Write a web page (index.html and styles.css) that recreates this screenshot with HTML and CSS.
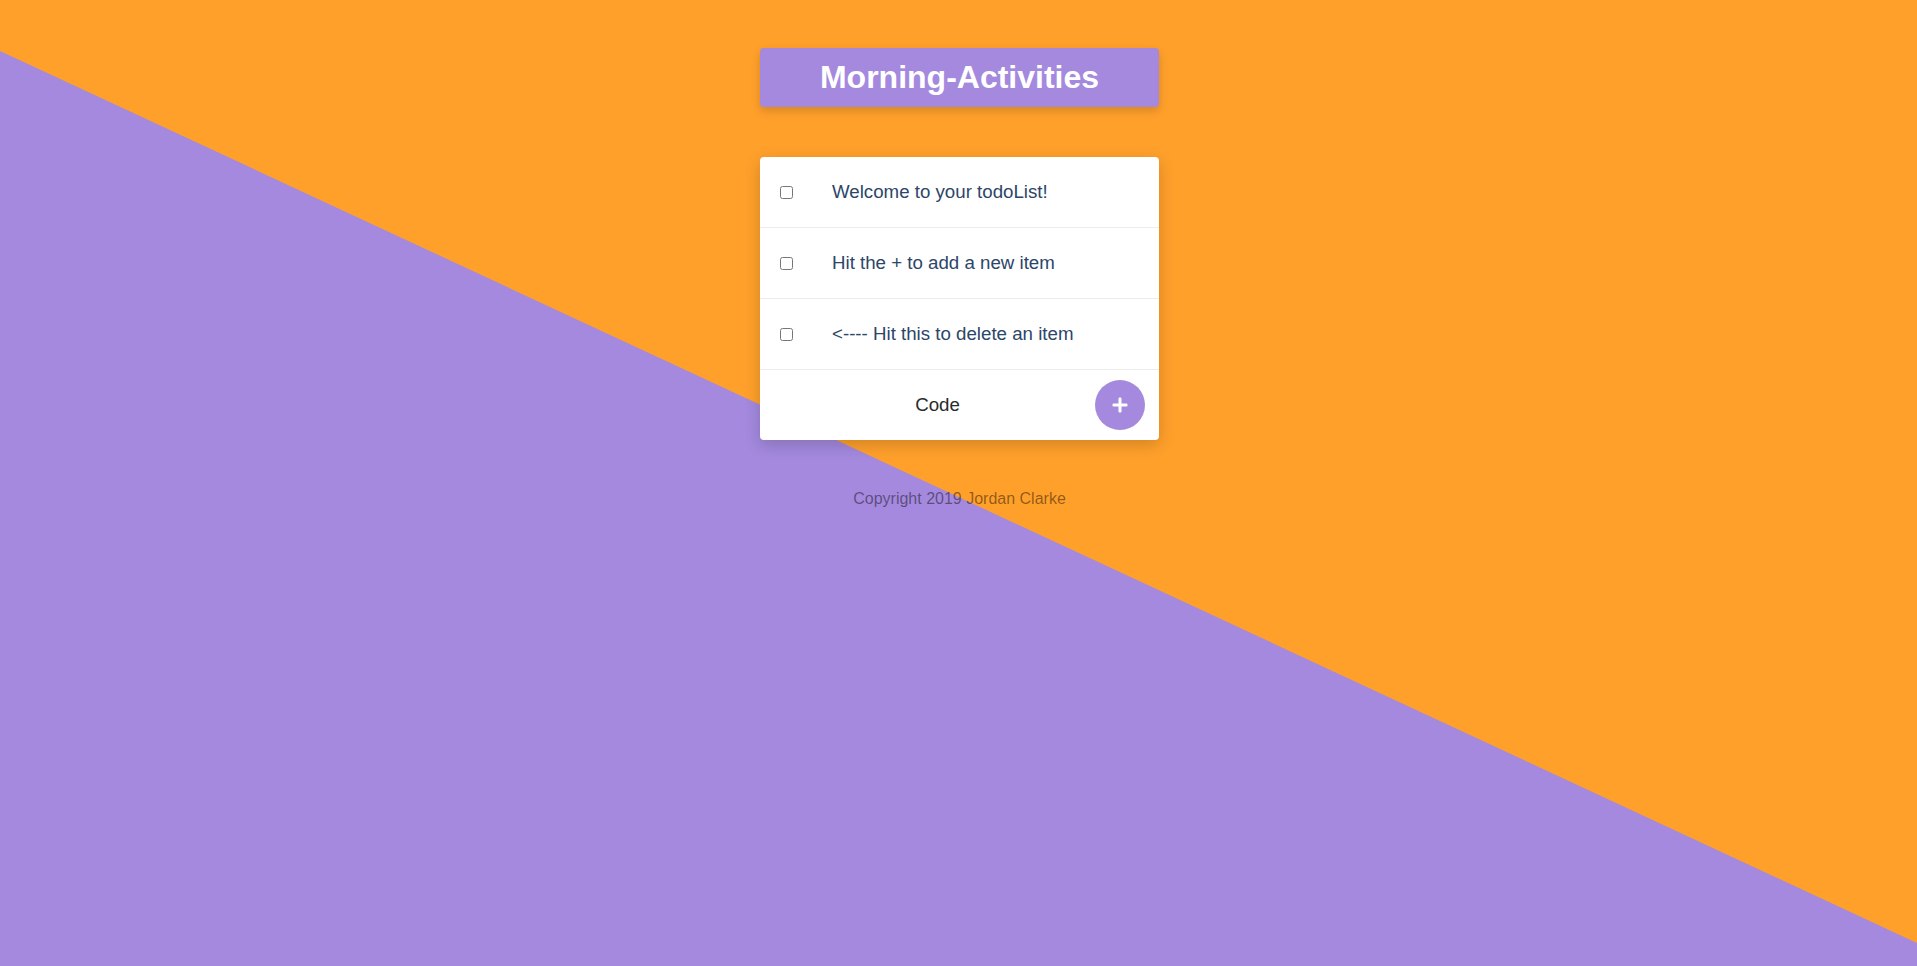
FILE: index.html
```html
<!DOCTYPE html>
<html lang="en">
<head>
<meta charset="utf-8">
<title>Morning-Activities</title>
<link rel="stylesheet" href="styles.css">
</head>
<body>
<div class="backdrop"></div>
<main class="page">
  <h1 class="title">Morning-Activities</h1>
  <section class="card">
    <div class="row">
      <input type="checkbox" class="check">
      <span class="item">Welcome to your todoList!</span>
    </div>
    <div class="row">
      <input type="checkbox" class="check">
      <span class="item">Hit the + to add a new item</span>
    </div>
    <div class="row">
      <input type="checkbox" class="check">
      <span class="item">&lt;---- Hit this to delete an item</span>
    </div>
    <div class="footer">
      <span class="code">Code</span>
      <button class="add" type="button" aria-label="Add item">
        <svg width="16" height="16" viewBox="0 0 16 16"><rect x="6.5" y="0.5" width="3" height="15" rx="1.2" fill="#fff"/><rect x="0.5" y="6.5" width="15" height="3" rx="1.2" fill="#fff"/></svg>
      </button>
    </div>
  </section>
  <p class="copyright">Copyright 2019 Jordan Clarke</p>
</main>
</body>
</html>
```

FILE: styles.css
```css
html, body {
  margin: 0;
  padding: 0;
  height: 100%;
}
body {
  background: #ffa02b;
  font-family: "Liberation Sans", Arial, sans-serif;
  position: relative;
  min-height: 966px;
  overflow: hidden;
}
.backdrop {
  position: absolute;
  inset: 0;
  background: #a489de;
  clip-path: polygon(0 51px, 100% 943px, 100% 100%, 0 100%);
  z-index: 0;
}
.page {
  position: relative;
  z-index: 1;
  display: flex;
  flex-direction: column;
  align-items: center;
  padding-top: 48px;
  padding-left: 2px;
}
.title {
  margin: 0;
  width: 399px;
  height: 59px;
  box-sizing: border-box;
  display: flex;
  align-items: center;
  justify-content: center;
  background: #a489de;
  color: #fff;
  font-size: 32px;
  font-weight: bold;
  border-radius: 4px;
  box-shadow: 0 4px 10px rgba(0, 0, 0, 0.16);
}
.card {
  margin-top: 50px;
  width: 399px;
  background: #fff;
  border-radius: 4px;
  box-shadow: 0 5px 16px rgba(0, 0, 0, 0.18);
  overflow: hidden;
}
.row {
  height: 70px;
  display: flex;
  align-items: center;
  padding-left: 20px;
  border-bottom: 1px solid #ececec;
}
.check {
  margin: 0;
  width: 13px;
  height: 13px;
}
.item {
  margin-left: 39px;
  font-size: 18.7px;
  color: #2c4669;
  line-height: 1;
}
.footer {
  height: 70px;
  display: flex;
  align-items: center;
  padding-left: 20px;
}
.code {
  flex: 1;
  text-align: center;
  font-size: 18.7px;
  color: #2a2a2a;
}
.add {
  width: 50px;
  height: 50px;
  margin-right: 14px;
  border: none;
  border-radius: 50%;
  background: #a489de;
  padding: 0;
  display: flex;
  align-items: center;
  justify-content: center;
  cursor: pointer;
}
.copyright {
  margin: 50px 0 0;
  font-size: 16px;
  line-height: 18px;
  color: rgba(0, 0, 0, 0.45);
}
```
